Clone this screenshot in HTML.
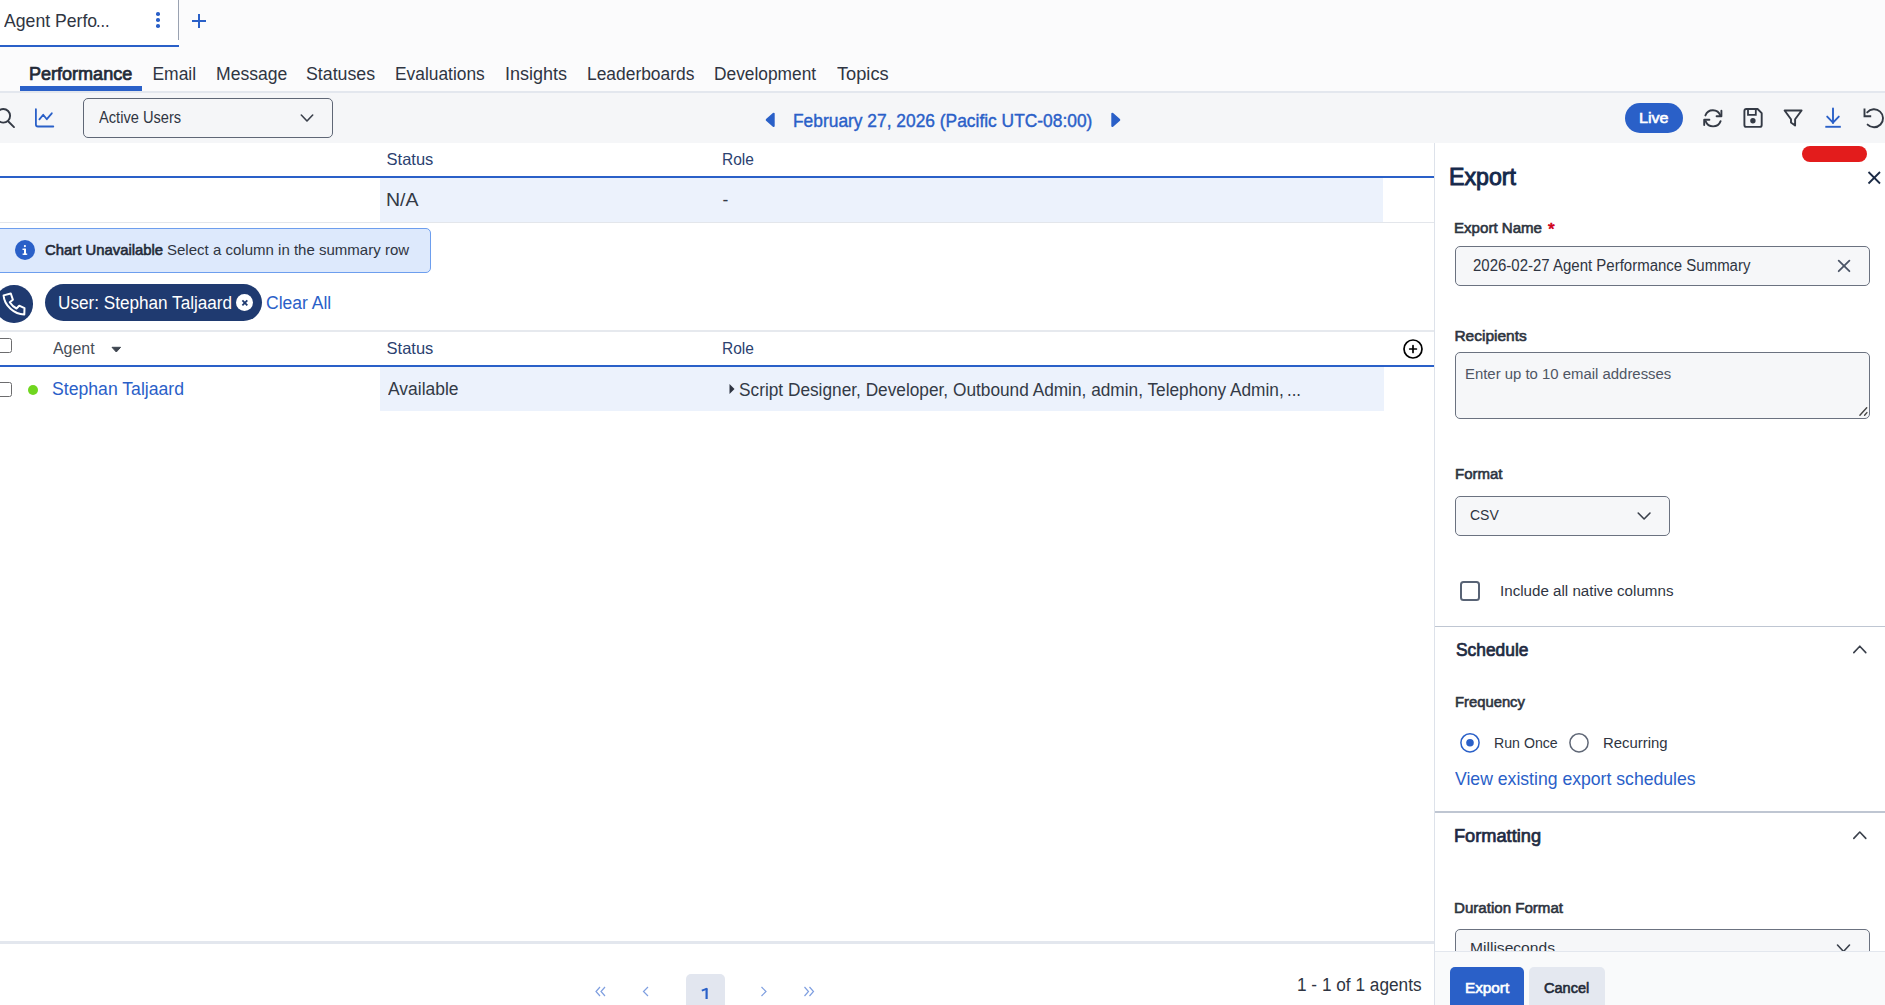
<!DOCTYPE html>
<html><head><meta charset="utf-8"><title>Agent Performance</title>
<style>
html,body{margin:0;padding:0;width:1885px;height:1005px;overflow:hidden;background:#ffffff;font-family:"Liberation Sans", sans-serif;}
.a{position:absolute;box-sizing:border-box;}
.tx{position:absolute;white-space:nowrap;line-height:1;font-family:"Liberation Sans", sans-serif;}
svg{position:absolute;overflow:visible;}
</style></head><body>
<!-- tab bar + nav background -->
<div class="a" style="left:0;top:0;width:1885px;height:91px;background:#fbfbfc"></div>
<div class="a" style="left:0;top:0;width:179px;height:45px;background:#ffffff"></div>
<div class="a" style="left:0;top:45px;width:179px;height:2px;background:#2a60c8"></div>
<div class="a" style="left:178px;top:0;width:1px;height:40px;background:#9aa2b1"></div>
<!-- kebab -->
<div class="a" style="left:156.2px;top:12px;width:3.6px;height:3.6px;border-radius:50%;background:#2a60c8"></div>
<div class="a" style="left:156.2px;top:18.1px;width:3.6px;height:3.6px;border-radius:50%;background:#2a60c8"></div>
<div class="a" style="left:156.2px;top:24.1px;width:3.6px;height:3.6px;border-radius:50%;background:#2a60c8"></div>
<!-- plus -->
<div class="a" style="left:192px;top:20px;width:14px;height:2px;background:#2a60c8"></div>
<div class="a" style="left:198px;top:14px;width:2px;height:14px;background:#2a60c8"></div>
<!-- nav underline -->
<div class="a" style="left:20px;top:86px;width:122px;height:5px;background:#2a60c8"></div>
<div class="a" style="left:0;top:91px;width:1885px;height:2px;background:#e3e7ee"></div>
<!-- toolbar -->
<div class="a" style="left:0;top:93px;width:1885px;height:50px;background:#f5f6f8"></div>
<div class="a" style="left:83px;top:98px;width:250px;height:40px;border:1px solid #5f6776;border-radius:5px;background:#f5f6f8"></div>
<!-- search icon -->
<svg style="left:0;top:0" width="1885" height="1005">
  <circle cx="3.3" cy="115.8" r="6.8" fill="none" stroke="#343a45" stroke-width="1.9"/>
  <line x1="8.6" y1="121.8" x2="14" y2="127.1" stroke="#343a45" stroke-width="1.9" stroke-linecap="round"/>
  <!-- chart icon -->
  <path d="M35.9,109.2 L35.9,124.5 Q35.9,126.5 37.9,126.5 L53.3,126.5" fill="none" stroke="#2a60c8" stroke-width="1.8" stroke-linecap="round" stroke-linejoin="round"/>
  <polyline points="39.4,119.4 43.2,114.8 46.8,119.2 51.8,113.3" fill="none" stroke="#2a60c8" stroke-width="1.8" stroke-linecap="round" stroke-linejoin="round"/>
  <!-- dropdown chevron -->
  <polyline points="301.3,115 307,121 312.7,115" fill="none" stroke="#3a404b" stroke-width="1.6" stroke-linecap="round" stroke-linejoin="round"/>
  <!-- date triangles -->
  <path d="M773.6,113.8 L773.6,126 L766.8,119.9 Z" fill="#2a60c8" stroke="#2a60c8" stroke-width="2.2" stroke-linejoin="round"/>
  <path d="M1112.4,113.8 L1112.4,126 L1119.2,119.9 Z" fill="#2a60c8" stroke="#2a60c8" stroke-width="2.2" stroke-linejoin="round"/>
</svg>
<!-- Live pill -->
<div class="a" style="left:1625px;top:103px;width:58px;height:30px;border-radius:15px;background:#2a60c8"></div>
<!-- right toolbar icons -->
<svg style="left:0;top:0" width="1885" height="1005">
  <!-- refresh -->
  <path d="M1705.4,115.4 A8,8 0 0 1 1720.4,115.6" fill="none" stroke="#343a45" stroke-width="1.9" stroke-linecap="round"/>
  <polyline points="1721.4,110.8 1721.4,116.2 1716.6,116.2" fill="none" stroke="#343a45" stroke-width="1.9" stroke-linecap="round" stroke-linejoin="round"/>
  <path d="M1720.6,121.2 A8,8 0 0 1 1705.6,121.2" fill="none" stroke="#343a45" stroke-width="1.9" stroke-linecap="round"/>
  <polyline points="1704.2,125 1704.2,119.7 1709.4,119.7" fill="none" stroke="#343a45" stroke-width="1.9" stroke-linecap="round" stroke-linejoin="round"/>
  <!-- save -->
  <path d="M1746.4,109 L1757.6,109 L1761.7,113.1 L1761.7,125 Q1761.7,126.9 1759.8,126.9 L1746.3,126.9 Q1744.4,126.9 1744.4,125 L1744.4,111 Q1744.4,109 1746.4,109 Z" fill="none" stroke="#343a45" stroke-width="1.9" stroke-linejoin="round"/>
  <path d="M1748,109 L1748,114.8 L1755.8,114.8 L1755.8,109" fill="none" stroke="#343a45" stroke-width="1.8"/>
  <circle cx="1752.9" cy="120.8" r="2.7" fill="#343a45"/>
  <!-- filter -->
  <path d="M1784.6,110.5 L1801.6,110.5 L1795.1,119.3 L1795.1,125.6 L1791,122.6 L1791,119.3 Z" fill="none" stroke="#343a45" stroke-width="1.9" stroke-linejoin="round"/>
  <!-- download -->
  <line x1="1833" y1="108.5" x2="1833" y2="123" stroke="#2a60c8" stroke-width="1.9" stroke-linecap="round"/>
  <polyline points="1827.2,116.6 1833,122.6 1838.8,116.6" fill="none" stroke="#2a60c8" stroke-width="1.9" stroke-linecap="round" stroke-linejoin="round"/>
  <line x1="1825.3" y1="126.8" x2="1840.8" y2="126.8" stroke="#2a60c8" stroke-width="1.9"/>
  <!-- undo -->
  <path d="M1867.2,112.4 A9,9 0 1 1 1867.6,124.6" fill="none" stroke="#343a45" stroke-width="1.9" stroke-linecap="round"/>
  <polyline points="1864.5,108.6 1864.5,116.2 1871.2,116.2" fill="none" stroke="#343a45" stroke-width="1.9" stroke-linecap="butt" stroke-linejoin="miter"/>
</svg>
<!-- summary table -->
<div class="a" style="left:0;top:176px;width:1434px;height:2px;background:#2a60c8"></div>
<div class="a" style="left:380px;top:178px;width:1003px;height:44px;background:#ecf2fc"></div>
<div class="a" style="left:0;top:222px;width:1434px;height:1px;background:#e3e6eb"></div>
<!-- info banner -->
<div class="a" style="left:-5px;top:228px;width:436px;height:45px;border:1px solid #6d9eee;border-radius:5px;background:#dde9fc"></div>
<svg style="left:0;top:0" width="1885" height="1005">
  <circle cx="25" cy="250" r="10" fill="#2a60c8"/>
  <rect x="24" y="248.6" width="2" height="6.3" fill="#fff"/>
  <rect x="22.5" y="248.6" width="2" height="1.4" fill="#fff"/>
  <rect x="22.6" y="253.5" width="4.6" height="1.4" fill="#fff"/>
  <circle cx="24.9" cy="246.1" r="1.1" fill="#fff"/>
</svg>
<!-- phone circle -->
<div class="a" style="left:-4.7px;top:285px;width:37.5px;height:37.5px;border-radius:50%;background:#1f3a70"></div>
<svg style="left:0;top:0" width="1885" height="1005">
  <path d="M3.6,295.4 L10.8,293.5 L12.9,299.8 L9.8,302.3 C11.6,305.2 13.6,307.1 16.5,308.5 L19.2,305.7 L24.5,308.1 L24.3,314.5 C14.5,314.6 4.2,305.6 3.6,295.4 Z" fill="none" stroke="#fff" stroke-width="2" stroke-linejoin="round"/>
</svg>
<!-- chip -->
<div class="a" style="left:45px;top:284px;width:217px;height:37px;border-radius:18.5px;background:#1f3a70"></div>
<div class="a" style="left:236px;top:294px;width:17px;height:17px;border-radius:50%;background:#ffffff"></div>
<svg style="left:0;top:0" width="1885" height="1005">
  <line x1="242.4" y1="300.4" x2="247.3" y2="305.3" stroke="#1f3a70" stroke-width="1.8"/>
  <line x1="247.3" y1="300.4" x2="242.4" y2="305.3" stroke="#1f3a70" stroke-width="1.8"/>
</svg>
<!-- table 2 -->
<div class="a" style="left:0;top:330px;width:1434px;height:2px;background:#e6e9ee"></div>
<div class="a" style="left:-6px;top:338px;width:17.8px;height:14.5px;border:1.7px solid #6c6c6e;border-radius:2.5px;background:#fff"></div>
<svg style="left:0;top:0" width="1885" height="1005">
  <path d="M112,347.3 L120.6,347.3 L116.3,352 Z" fill="#3f4650" stroke="#3f4650" stroke-width="1" stroke-linejoin="round"/>
  <circle cx="1413" cy="349" r="9" fill="none" stroke="#000" stroke-width="1.7"/>
  <line x1="1409.7" y1="349" x2="1416.4" y2="349" stroke="#000" stroke-width="1.7" stroke-linecap="round"/>
  <line x1="1413" y1="345.7" x2="1413" y2="352.4" stroke="#000" stroke-width="1.7" stroke-linecap="round"/>
</svg>
<div class="a" style="left:0;top:365px;width:1434px;height:2px;background:#2a60c8"></div>
<div class="a" style="left:380px;top:367px;width:1004px;height:44px;background:#ecf2fc"></div>
<svg style="left:0;top:0" width="1885" height="1005">
  <path d="M729.5,384 L729.5,394 L734.5,389 Z" fill="#2f3542"/>
</svg>
<div class="a" style="left:-6px;top:382px;width:17.8px;height:14.5px;border:1.7px solid #6c6c6e;border-radius:2.5px;background:#fff"></div>
<div class="a" style="left:28px;top:385px;width:10px;height:10px;border-radius:50%;background:#70d61f"></div>
<!-- bottom -->
<div class="a" style="left:0;top:941px;width:1434px;height:3px;background:#e3e7ee"></div>
<div class="a" style="left:686px;top:974px;width:39px;height:40px;border-radius:5px;background:#e2e6ef"></div>
<svg style="left:0;top:0" width="1885" height="1005"><path d="M706.6,988.3 L706.6,999" stroke="#2a60c8" stroke-width="2.2" fill="none"/><path d="M707.2,988.6 L701.8,990.6" stroke="#2a60c8" stroke-width="1.9" fill="none"/></svg>
<svg style="left:0;top:0" width="1885" height="1005">
  <polyline points="600,987 596,991.5 600,996" fill="none" stroke="#7f9fe0" stroke-width="1.2"/>
  <polyline points="605,987 601,991.5 605,996" fill="none" stroke="#7f9fe0" stroke-width="1.2"/>
  <polyline points="648,987 643.5,991.5 648,996" fill="none" stroke="#7f9fe0" stroke-width="1.2"/>
  <polyline points="761.5,987 766,991.5 761.5,996" fill="none" stroke="#7f9fe0" stroke-width="1.2"/>
  <polyline points="804.5,987 808.5,991.5 804.5,996" fill="none" stroke="#7f9fe0" stroke-width="1.2"/>
  <polyline points="809.5,987 813.5,991.5 809.5,996" fill="none" stroke="#7f9fe0" stroke-width="1.2"/>
</svg>
<!-- panel -->
<div class="a" style="left:1434px;top:143px;width:1px;height:862px;background:#dde2ea"></div>
<div class="a" style="left:1802px;top:146px;width:65px;height:16px;border-radius:8px;background:#e31c1c"></div>
<svg style="left:0;top:0" width="1885" height="1005">
  <line x1="1868.5" y1="172" x2="1880" y2="183.5" stroke="#1b2a45" stroke-width="1.8"/>
  <line x1="1880" y1="172" x2="1868.5" y2="183.5" stroke="#1b2a45" stroke-width="1.8"/>
</svg>
<div class="a" style="left:1455px;top:246px;width:415px;height:40px;border:1px solid #6b7280;border-radius:5px;background:#f6f7f9"></div>
<svg style="left:0;top:0" width="1885" height="1005">
  <line x1="1838.7" y1="260.6" x2="1849.4" y2="271.2" stroke="#4b5567" stroke-width="1.8" stroke-linecap="round"/>
  <line x1="1849.4" y1="260.6" x2="1838.7" y2="271.2" stroke="#4b5567" stroke-width="1.8" stroke-linecap="round"/>
</svg>
<div class="a" style="left:1455px;top:352px;width:415px;height:67px;border:1px solid #6b7280;border-radius:5px;background:#f6f7f9"></div>
<svg style="left:0;top:0" width="1885" height="1005">
  <line x1="1859.9" y1="415.2" x2="1866.7" y2="407.8" stroke="#444" stroke-width="1.4" stroke-linecap="round"/>
  <line x1="1864.6" y1="415.2" x2="1866.9" y2="412.6" stroke="#444" stroke-width="1.4" stroke-linecap="round"/>
</svg>
<div class="a" style="left:1455px;top:496px;width:215px;height:40px;border:1px solid #6b7280;border-radius:5px;background:#f6f7f9"></div>
<svg style="left:0;top:0" width="1885" height="1005">
  <polyline points="1638.2,513 1644.1,519 1650,513" fill="none" stroke="#3a404b" stroke-width="1.6" stroke-linecap="round" stroke-linejoin="round"/>
</svg>
<div class="a" style="left:1460px;top:581px;width:20px;height:20px;border:2px solid #586375;border-radius:3.5px;background:#fff"></div>
<div class="a" style="left:1435px;top:625.5px;width:450px;height:1.5px;background:#bfc6d2"></div>
<svg style="left:0;top:0" width="1885" height="1005">
  <polyline points="1853.8,652.6 1859.8,646.2 1865.8,652.6" fill="none" stroke="#3a404b" stroke-width="1.6" stroke-linecap="round" stroke-linejoin="round"/>
  <circle cx="1470" cy="742.8" r="9.1" fill="none" stroke="#2a60c8" stroke-width="1.5"/>
  <circle cx="1470" cy="742.8" r="3.8" fill="#2a60c8"/>
  <circle cx="1579" cy="742.8" r="9.1" fill="none" stroke="#5f6776" stroke-width="1.5"/>
  <polyline points="1853.8,838.4 1859.8,832 1865.8,838.4" fill="none" stroke="#3a404b" stroke-width="1.6" stroke-linecap="round" stroke-linejoin="round"/>
</svg>
<div class="a" style="left:1435px;top:811px;width:450px;height:2px;background:#bfc6d2"></div>
<div class="a" style="left:1455px;top:929px;width:415px;height:40px;border:1px solid #6b7280;border-radius:5px;background:#f6f7f9"></div>
<svg style="left:0;top:0" width="1885" height="1005">
  <polyline points="1837.5,945 1843.5,951.5 1849.5,945" fill="none" stroke="#3a404b" stroke-width="1.6" stroke-linecap="round" stroke-linejoin="round"/>
</svg>
<!-- footer placed after texts via z-index -->
<div class="a" style="left:1435px;top:951px;width:450px;height:54px;background:#f9fafb;border-top:1px solid #e3e7ee;z-index:5"></div>
<div class="a" style="left:1450px;top:967px;width:74px;height:45px;border-radius:5px;background:#2a60c8;z-index:5"></div>
<div class="a" style="left:1529px;top:967px;width:76px;height:45px;border-radius:5px;background:#e4e8f0;z-index:5"></div>

<div class='tx' style='left:4.10px;top:11.54px;font-size:18.5px;font-weight:400;color:#2f3542;letter-spacing:0.000px;transform-origin:0 0;transform:scaleX(0.9536);'>Agent Perfo</div>
<div class='tx' style='left:96.42px;top:11.54px;font-size:18.5px;font-weight:400;color:#2f3542;letter-spacing:0.000px;transform-origin:0 0;transform:scaleX(0.8846);'>...</div>
<div class='tx' style='left:29.37px;top:65.99px;font-size:17.5px;font-weight:400;-webkit-text-stroke:0.70px #232a37;color:#232a37;letter-spacing:0.000px;transform-origin:0 0;transform:scaleX(1.0303);'>Performance</div>
<div class='tx' style='left:152.40px;top:65.99px;font-size:17.5px;font-weight:400;color:#2f3542;letter-spacing:0.000px;transform-origin:0 0;transform:scaleX(1.0000);'>Email</div>
<div class='tx' style='left:215.80px;top:65.99px;font-size:17.5px;font-weight:400;color:#2f3542;letter-spacing:0.000px;transform-origin:0 0;transform:scaleX(1.0043);'>Message</div>
<div class='tx' style='left:306.19px;top:65.99px;font-size:17.5px;font-weight:400;color:#2f3542;letter-spacing:0.000px;transform-origin:0 0;transform:scaleX(1.0149);'>Statuses</div>
<div class='tx' style='left:395.01px;top:65.99px;font-size:17.5px;font-weight:400;color:#2f3542;letter-spacing:0.000px;transform-origin:0 0;transform:scaleX(0.9921);'>Evaluations</div>
<div class='tx' style='left:504.57px;top:65.99px;font-size:17.5px;font-weight:400;color:#2f3542;letter-spacing:0.000px;transform-origin:0 0;transform:scaleX(1.0288);'>Insights</div>
<div class='tx' style='left:586.51px;top:65.99px;font-size:17.5px;font-weight:400;color:#2f3542;letter-spacing:0.000px;transform-origin:0 0;transform:scaleX(0.9944);'>Leaderboards</div>
<div class='tx' style='left:713.91px;top:65.99px;font-size:17.5px;font-weight:400;color:#2f3542;letter-spacing:0.000px;transform-origin:0 0;transform:scaleX(0.9902);'>Development</div>
<div class='tx' style='left:837.10px;top:65.99px;font-size:17.5px;font-weight:400;color:#2f3542;letter-spacing:0.000px;transform-origin:0 0;transform:scaleX(1.0408);'>Topics</div>
<div class='tx' style='left:99.30px;top:109.86px;font-size:16px;font-weight:400;color:#2f3542;letter-spacing:0.000px;transform-origin:0 0;transform:scaleX(0.9144);'>Active Users</div>
<div class='tx' style='left:793.36px;top:112.34px;font-size:18.5px;font-weight:400;-webkit-text-stroke:0.41px #2a60c8;color:#2a60c8;letter-spacing:0.000px;transform-origin:0 0;transform:scaleX(0.9391);'>February 27, 2026 (Pacific UTC-08:00)</div>
<div class='tx' style='left:1639.16px;top:110.28px;font-size:15.5px;font-weight:400;-webkit-text-stroke:0.62px #ffffff;color:#ffffff;letter-spacing:0.000px;transform-origin:0 0;transform:scaleX(1.0370);'>Live</div>
<div class='tx' style='left:386.60px;top:151.23px;font-size:16.5px;font-weight:400;color:#2b4170;letter-spacing:0.000px;transform-origin:0 0;transform:scaleX(1.0000);'>Status</div>
<div class='tx' style='left:721.76px;top:151.23px;font-size:16.5px;font-weight:400;color:#2b4170;letter-spacing:0.000px;transform-origin:0 0;transform:scaleX(0.9394);'>Role</div>
<div class='tx' style='left:386.49px;top:192.19px;font-size:17.5px;font-weight:400;color:#333a46;letter-spacing:0.000px;transform-origin:0 0;transform:scaleX(1.1143);'>N/A</div>
<div class='tx' style='left:722.50px;top:192.19px;font-size:17.5px;font-weight:400;color:#333a46;letter-spacing:0.000px;transform-origin:0 0;transform:scaleX(1.0000);'>-</div>
<div class='tx' style='left:45.10px;top:243.07px;font-size:14.8px;font-weight:400;-webkit-text-stroke:0.59px #232a37;color:#232a37;letter-spacing:0.000px;transform-origin:0 0;transform:scaleX(1.0042);'>Chart Unavailable</div>
<div class='tx' style='left:166.98px;top:243.07px;font-size:14.8px;font-weight:400;color:#2f3542;letter-spacing:0.000px;transform-origin:0 0;transform:scaleX(1.0151);'>Select a column in the summary row</div>
<div class='tx' style='left:57.65px;top:294.46px;font-size:18px;font-weight:400;color:#ffffff;letter-spacing:0.000px;transform-origin:0 0;transform:scaleX(0.9525);'>User: Stephan Taljaard</div>
<div class='tx' style='left:266.33px;top:294.46px;font-size:18px;font-weight:400;color:#2a60c8;letter-spacing:0.000px;transform-origin:0 0;transform:scaleX(0.9723);'>Clear All</div>
<div class='tx' style='left:53.00px;top:339.53px;font-size:16.5px;font-weight:400;color:#474d57;letter-spacing:0.000px;transform-origin:0 0;transform:scaleX(0.9651);'>Agent</div>
<div class='tx' style='left:386.60px;top:340.03px;font-size:16.5px;font-weight:400;color:#2b4170;letter-spacing:0.000px;transform-origin:0 0;transform:scaleX(1.0000);'>Status</div>
<div class='tx' style='left:721.76px;top:340.03px;font-size:16.5px;font-weight:400;color:#2b4170;letter-spacing:0.000px;transform-origin:0 0;transform:scaleX(0.9394);'>Role</div>
<div class='tx' style='left:51.99px;top:380.69px;font-size:17.5px;font-weight:400;color:#2a60c8;letter-spacing:0.000px;transform-origin:0 0;transform:scaleX(1.0078);'>Stephan Taljaard</div>
<div class='tx' style='left:388.00px;top:381.19px;font-size:17.5px;font-weight:400;color:#333a46;letter-spacing:0.000px;transform-origin:0 0;transform:scaleX(0.9971);'>Available</div>
<div class='tx' style='left:739.01px;top:381.99px;font-size:17.5px;font-weight:400;color:#333a46;letter-spacing:0.000px;transform-origin:0 0;transform:scaleX(0.9864);'>Script Designer, Developer, Outbound Admin, admin, Telephony Admin,</div>
<div class='tx' style='left:1286.54px;top:381.99px;font-size:17.5px;font-weight:400;color:#333a46;letter-spacing:0.000px;transform-origin:0 0;transform:scaleX(0.9583);'>...</div>
<div class='tx' style='left:1296.74px;top:975.76px;font-size:18px;font-weight:400;color:#2f3542;letter-spacing:0.000px;transform-origin:0 0;transform:scaleX(0.9574);'>1 - 1 of 1 agents</div>
<div class='tx' style='left:1449.03px;top:164.68px;font-size:24px;font-weight:400;-webkit-text-stroke:0.96px #15294b;color:#15294b;letter-spacing:0.000px;transform-origin:0 0;transform:scaleX(0.9652);'>Export</div>
<div class='tx' style='left:1454.43px;top:220.28px;font-size:15.5px;font-weight:400;-webkit-text-stroke:0.62px #2d3440;color:#2d3440;letter-spacing:0.000px;transform-origin:0 0;transform:scaleX(0.9730);'>Export Name</div>
<div class='tx' style='left:1548.00px;top:220.61px;font-size:17px;font-weight:400;-webkit-text-stroke:0.68px #d0021b;color:#d0021b;letter-spacing:0.000px;transform-origin:0 0;transform:scaleX(1.0000);'>*</div>
<div class='tx' style='left:1473.00px;top:257.76px;font-size:16px;font-weight:400;color:#2f3542;letter-spacing:0.000px;transform-origin:0 0;transform:scaleX(0.9368);'>2026-02-27 Agent Performance Summary</div>
<div class='tx' style='left:1454.40px;top:328.38px;font-size:15.5px;font-weight:400;-webkit-text-stroke:0.62px #2d3440;color:#2d3440;letter-spacing:0.000px;transform-origin:0 0;transform:scaleX(1.0000);'>Recipients</div>
<div class='tx' style='left:1465.44px;top:365.68px;font-size:15.5px;font-weight:400;color:#4f5664;letter-spacing:0.000px;transform-origin:0 0;transform:scaleX(0.9615);'>Enter up to 10 email addresses</div>
<div class='tx' style='left:1454.63px;top:466.48px;font-size:15.5px;font-weight:400;-webkit-text-stroke:0.62px #2d3440;color:#2d3440;letter-spacing:0.000px;transform-origin:0 0;transform:scaleX(0.9673);'>Format</div>
<div class='tx' style='left:1470.30px;top:507.08px;font-size:15.5px;font-weight:400;color:#2f3542;letter-spacing:0.000px;transform-origin:0 0;transform:scaleX(0.9032);'>CSV</div>
<div class='tx' style='left:1499.52px;top:582.88px;font-size:15.5px;font-weight:400;color:#2f3542;letter-spacing:0.000px;transform-origin:0 0;transform:scaleX(0.9773);'>Include all native columns</div>
<div class='tx' style='left:1455.60px;top:640.76px;font-size:18px;font-weight:400;-webkit-text-stroke:0.72px #1f2b42;color:#1f2b42;letter-spacing:0.000px;transform-origin:0 0;transform:scaleX(0.9653);'>Schedule</div>
<div class='tx' style='left:1454.65px;top:693.88px;font-size:15.5px;font-weight:400;-webkit-text-stroke:0.62px #2d3440;color:#2d3440;letter-spacing:0.000px;transform-origin:0 0;transform:scaleX(0.9548);'>Frequency</div>
<div class='tx' style='left:1494.39px;top:734.88px;font-size:15.5px;font-weight:400;color:#2f3542;letter-spacing:0.000px;transform-origin:0 0;transform:scaleX(0.9130);'>Run Once</div>
<div class='tx' style='left:1602.94px;top:734.88px;font-size:15.5px;font-weight:400;color:#2f3542;letter-spacing:0.000px;transform-origin:0 0;transform:scaleX(0.9621);'>Recurring</div>
<div class='tx' style='left:1455.20px;top:770.34px;font-size:18.5px;font-weight:400;color:#2a60c8;letter-spacing:0.000px;transform-origin:0 0;transform:scaleX(0.9524);'>View existing export schedules</div>
<div class='tx' style='left:1454.19px;top:826.76px;font-size:18px;font-weight:400;-webkit-text-stroke:0.72px #1f2b42;color:#1f2b42;letter-spacing:0.000px;transform-origin:0 0;transform:scaleX(1.0118);'>Formatting</div>
<div class='tx' style='left:1454.23px;top:900.38px;font-size:15.5px;font-weight:400;-webkit-text-stroke:0.62px #2d3440;color:#2d3440;letter-spacing:0.000px;transform-origin:0 0;transform:scaleX(0.9732);'>Duration Format</div>
<div class='tx' style='left:1469.99px;top:940.38px;font-size:15.5px;font-weight:400;color:#2f3542;letter-spacing:0.000px;transform-origin:0 0;transform:scaleX(1.0060);'>Milliseconds</div>
<div class='tx' style='left:1464.51px;top:979.88px;font-size:15.5px;font-weight:400;-webkit-text-stroke:0.62px #ffffff;color:#ffffff;letter-spacing:0.000px;transform-origin:0 0;transform:scaleX(0.9864);z-index:6'>Export</div>
<div class='tx' style='left:1544.40px;top:979.88px;font-size:15.5px;font-weight:400;-webkit-text-stroke:0.62px #232a37;color:#232a37;letter-spacing:0.000px;transform-origin:0 0;transform:scaleX(0.9375);z-index:6'>Cancel</div>
</body></html>
